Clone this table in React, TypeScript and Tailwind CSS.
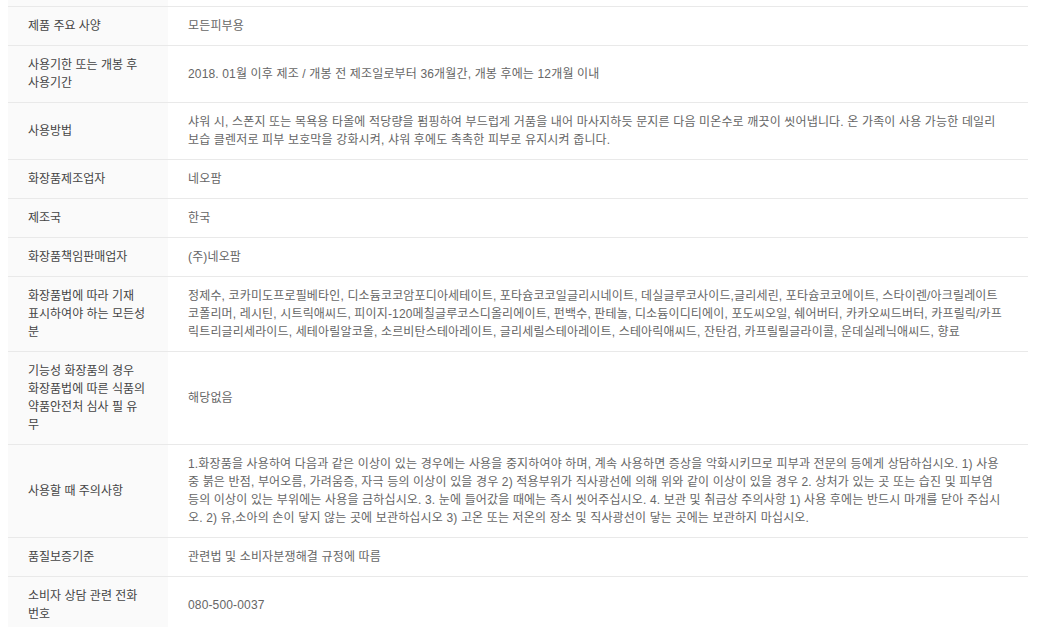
const rows: { label: string; value: string }[] = [
  { label: "제품 주요 사양", value: "모든피부용" },
  {
    label: "사용기한 또는 개봉 후 사용기간",
    value: "2018. 01월 이후 제조 / 개봉 전 제조일로부터 36개월간, 개봉 후에는 12개월 이내",
  },
  {
    label: "사용방법",
    value:
      "샤워 시, 스폰지 또는 목욕용 타올에 적당량을 펌핑하여 부드럽게 거품을 내어 마사지하듯 문지른 다음 미온수로 깨끗이 씻어냅니다. 온 가족이 사용 가능한 데일리 보습 클렌저로 피부 보호막을 강화시켜, 샤워 후에도 촉촉한 피부로 유지시켜 줍니다.",
  },
  { label: "화장품제조업자", value: "네오팜" },
  { label: "제조국", value: "한국" },
  { label: "화장품책임판매업자", value: "(주)네오팜" },
  {
    label: "화장품법에 따라 기재 표시하여야 하는 모든성분",
    value:
      "정제수, 코카미도프로필베타인, 디소듐코코암포디아세테이트, 포타슘코코일글리시네이트, 데실글루코사이드,글리세린, 포타슘코코에이트, 스타이렌/아크릴레이트코폴리머, 레시틴, 시트릭애씨드, 피이지-120메칠글루코스디올리에이트, 펀백수, 판테놀, 디소듐이디티에이, 포도씨오일, 쉐어버터, 카카오씨드버터, 카프릴릭/카프릭트리글리세라이드, 세테아릴알코올, 소르비탄스테아레이트, 글리세릴스테아레이트, 스테아릭애씨드, 잔탄검, 카프릴릴글라이콜, 운데실레닉애씨드, 향료",
  },
  {
    label: "기능성 화장품의 경우 화장품법에 따른 식품의약품안전처 심사 필 유무",
    value: "해당없음",
  },
  {
    label: "사용할 때 주의사항",
    value:
      "1.화장품을 사용하여 다음과 같은 이상이 있는 경우에는 사용을 중지하여야 하며, 계속 사용하면 증상을 악화시키므로 피부과 전문의 등에게 상담하십시오. 1) 사용 중 붉은 반점, 부어오름, 가려움증, 자극 등의 이상이 있을 경우 2) 적용부위가 직사광선에 의해 위와 같이 이상이 있을 경우 2. 상처가 있는 곳 또는 습진 및 피부염 등의 이상이 있는 부위에는 사용을 금하십시오. 3. 눈에 들어갔을 때에는 즉시 씻어주십시오. 4. 보관 및 취급상 주의사항 1) 사용 후에는 반드시 마개를 닫아 주십시오. 2) 유,소아의 손이 닿지 않는 곳에 보관하십시오 3) 고온 또는 저온의 장소 및 직사광선이 닿는 곳에는 보관하지 마십시오.",
  },
  { label: "품질보증기준", value: "관련법 및 소비자분쟁해결 규정에 따름" },
  { label: "소비자 상담 관련 전화번호", value: "080-500-0037" },
];

export default function App() {
  return (
    <div
      className="h-[627px] w-[1037px] overflow-hidden bg-white"
      style={{ fontFamily: '"Liberation Sans", "Noto Sans CJK KR", sans-serif' }}
    >
      <div className="ml-2 w-[1020px]">
        <div className="flex h-[6px]">
          <div className="w-[160px] shrink-0 bg-[#fafafa]" />
          <div className="flex-1" />
        </div>
        {rows.map((r) => (
          <div key={r.label} className="flex border-t border-[#e9e9e9] text-[12px] leading-[18px]">
            <div className="flex w-[160px] shrink-0 items-center bg-[#fafafa] px-5 py-[10px] break-all text-[#444]">
              {r.label}
            </div>
            <div className="flex flex-1 items-center py-[10px] pl-5 pr-[22px] tracking-[0.15px] text-[#666]">
              {r.value}
            </div>
          </div>
        ))}
      </div>
    </div>
  );
}
